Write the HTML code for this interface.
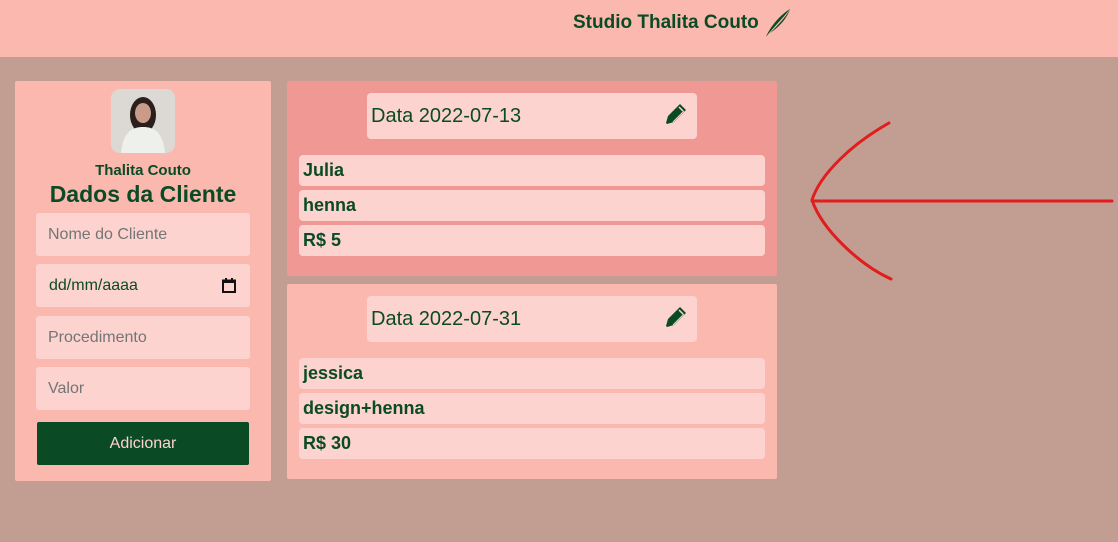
<!DOCTYPE html>
<html><head><meta charset="utf-8"><style>
*{margin:0;padding:0;box-sizing:border-box}
body{width:1118px;height:542px;background:#c29d92;font-family:"Liberation Sans",sans-serif;position:relative;overflow:hidden;color:#0a4a24}
.abs{position:absolute}
.hdr{left:0;top:0;width:1118px;height:57px;background:#fbb8ae}
.card{background:#fbb8ae;border-radius:2px}
.inp{position:absolute;left:21px;width:214px;height:43px;background:#fcd3cf;border-radius:3px;color:#757575;font-size:16px;padding:13px 0 0 12px}
.row{position:absolute;left:12px;width:466px;height:31px;background:#fcd3cf;border-radius:4px;font-weight:bold;font-size:18px;padding:5px 0 0 4px}
.dt{position:absolute;left:80px;top:12px;width:330px;height:46px;background:#fcd3cf;border-radius:4px;font-size:20px;padding:12px 0 0 4px}
.pen{position:absolute;right:10px;top:10px}
</style></head><body>
<div class="abs hdr"></div>
<div class="abs" style="left:573px;top:12px;font-size:19px;font-weight:bold">Studio Thalita Couto</div>
<svg class="abs" style="left:762px;top:7px" width="32" height="32" viewBox="0 0 32 32"><path d="M28 2 C18 8 8 20 4 30 C10 22 20 12 28 2Z M28 2 C24 14 14 22 8 26 C16 18 24 10 28 2Z" fill="#0a4a24"/></svg>

<div class="abs card" style="left:15px;top:81px;width:256px;height:400px">
  <div class="abs" style="left:96px;top:8px;width:64px;height:64px;border-radius:9px;background:#dcd9d5;overflow:hidden">
    <svg width="64" height="64"><ellipse cx="32" cy="26" rx="13" ry="18" fill="#2a1f1c"/><ellipse cx="32" cy="24" rx="8" ry="10" fill="#c99b88"/><path d="M10 64 C12 44 20 38 32 38 C44 38 52 44 54 64Z" fill="#eef0ec"/></svg>
  </div>
  <div class="abs" style="left:0;width:256px;top:81px;text-align:center;font-weight:bold;font-size:15px">Thalita Couto</div>
  <div class="abs" style="left:0;width:256px;top:100px;text-align:center;font-weight:bold;font-size:23px">Dados da Cliente</div>
  <div class="inp" style="top:132px">Nome do Cliente</div>
  <div class="inp" style="top:183px;color:#0a4a24;padding-left:13px">dd/mm/aaaa
    <svg class="abs" style="right:14px;top:14px" width="14" height="15" viewBox="0 0 14 15"><rect x="1" y="2.5" width="12" height="11.5" fill="none" stroke="#111" stroke-width="2"/><rect x="1" y="2" width="12" height="3" fill="#111"/><rect x="3" y="0" width="2" height="3" fill="#111"/><rect x="9" y="0" width="2" height="3" fill="#111"/></svg></div>
  <div class="inp" style="top:235px">Procedimento</div>
  <div class="inp" style="top:286px">Valor</div>
  <div class="abs" style="left:22px;top:341px;width:212px;height:43px;background:#0a4a24;border-radius:2px;color:#fcd3cf;font-size:16px;text-align:center;line-height:43px">Adicionar</div>
</div>

<div class="abs card" style="left:287px;top:81px;width:490px;height:195px;background:#f09893">
  <div class="dt">Data 2022-07-13<svg class="pen" width="22" height="22" viewBox="0 0 22 22"><path d="M15 1 L21 7 L9 19 L2 21 L1 20 L3 13 Z" fill="#0a4a24"/><path d="M14 4 L18 8" stroke="#fcd3cf" stroke-width="1.5"/><path d="M8 19 L19 8" stroke="#fcd3cf" stroke-width="1"/></svg></div>
  <div class="row" style="top:74px">Julia</div>
  <div class="row" style="top:109px">henna</div>
  <div class="row" style="top:144px">R$ 5</div>
</div>

<div class="abs card" style="left:287px;top:284px;width:490px;height:195px">
  <div class="dt">Data 2022-07-31<svg class="pen" width="22" height="22" viewBox="0 0 22 22"><path d="M15 1 L21 7 L9 19 L2 21 L1 20 L3 13 Z" fill="#0a4a24"/><path d="M14 4 L18 8" stroke="#fcd3cf" stroke-width="1.5"/><path d="M8 19 L19 8" stroke="#fcd3cf" stroke-width="1"/></svg></div>
  <div class="row" style="top:74px">jessica</div>
  <div class="row" style="top:109px">design+henna</div>
  <div class="row" style="top:144px">R$ 30</div>
</div>

<svg class="abs" style="left:0;top:0" width="1118" height="542"><path d="M889 123 C850 145 820 175 812 200 C822 230 860 265 891 279 M812 201 L1112 201" fill="none" stroke="#e11d1d" stroke-width="3" stroke-linecap="round"/></svg>
</body></html>
